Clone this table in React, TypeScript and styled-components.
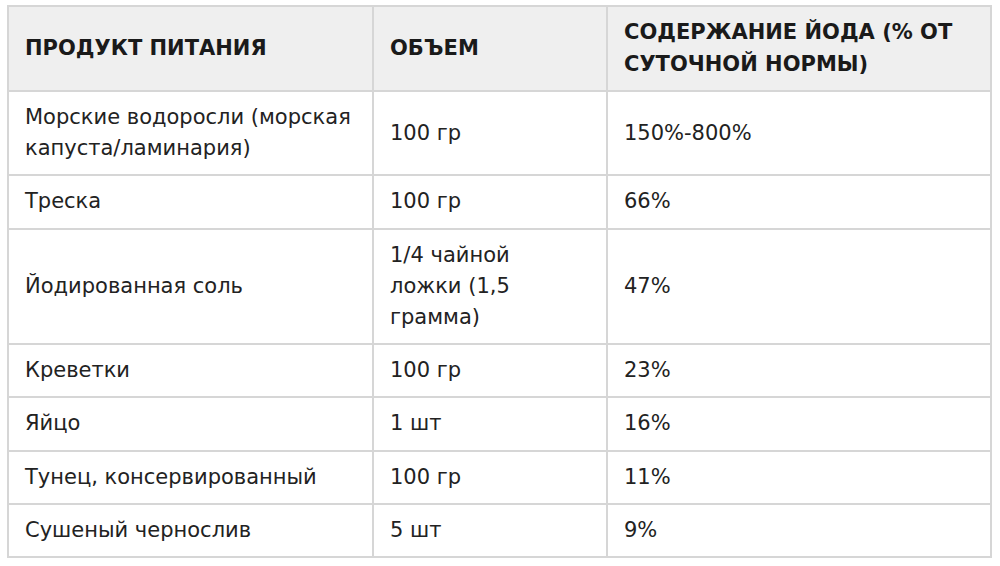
import React from 'react';
import styled, { createGlobalStyle } from 'styled-components';

const GlobalStyle = createGlobalStyle`
  html, body {
    margin: 0;
    padding: 0;
    background: #ffffff;
  }
`;

const Page = styled.div`
  padding: 5px 0 0 7px;
  font-family: "DejaVu Sans", Verdana, sans-serif;
  color: #222222;
`;

const Table = styled.table`
  width: 983px;
  border-collapse: collapse;
  table-layout: fixed;
  border: 2px solid #d6d6d6;
`;

const HeadCell = styled.th<{ $width: number }>`
  box-sizing: border-box;
  width: ${props => props.$width}px;
  height: 85px;
  background: #efefef;
  border: 2px solid #d6d6d6;
  padding: 10px 16px;
  text-align: left;
  font-weight: bold;
  font-size: 21px;
  line-height: 31.5px;
  color: #1a1a1a;
  vertical-align: middle;
`;

const Cell = styled.td<{ $narrow?: boolean }>`
  box-sizing: border-box;
  border: 2px solid #d6d6d6;
  padding: 10px ${props => (props.$narrow ? 46 : 15)}px 10px 16px;
  font-size: 21px;
  line-height: 31.2px;
  vertical-align: middle;
`;

type Row = { product: string; volume: string; iodine: string };

const rows: Row[] = [
  { product: 'Морские водоросли (морская капуста/ламинария)', volume: '100 гр', iodine: '150%-800%' },
  { product: 'Треска', volume: '100 гр', iodine: '66%' },
  { product: 'Йодированная соль', volume: '1/4 чайной ложки (1,5 грамма)', iodine: '47%' },
  { product: 'Креветки', volume: '100 гр', iodine: '23%' },
  { product: 'Яйцо', volume: '1 шт', iodine: '16%' },
  { product: 'Тунец, консервированный', volume: '100 гр', iodine: '11%' },
  { product: 'Сушеный чернослив', volume: '5 шт', iodine: '9%' },
];

const App: React.FC = () => {
  return (
    <>
      <GlobalStyle />
      <Page>
        <Table>
          <thead>
            <tr>
              <HeadCell $width={365}>ПРОДУКТ ПИТАНИЯ</HeadCell>
              <HeadCell $width={234}>ОБЪЕМ</HeadCell>
              <HeadCell $width={384}>СОДЕРЖАНИЕ ЙОДА (% ОТ СУТОЧНОЙ НОРМЫ)</HeadCell>
            </tr>
          </thead>
          <tbody>
            {rows.map(row => (
              <tr key={row.product}>
                <Cell>{row.product}</Cell>
                <Cell $narrow>{row.volume}</Cell>
                <Cell>{row.iodine}</Cell>
              </tr>
            ))}
          </tbody>
        </Table>
      </Page>
    </>
  );
};

export default App;
